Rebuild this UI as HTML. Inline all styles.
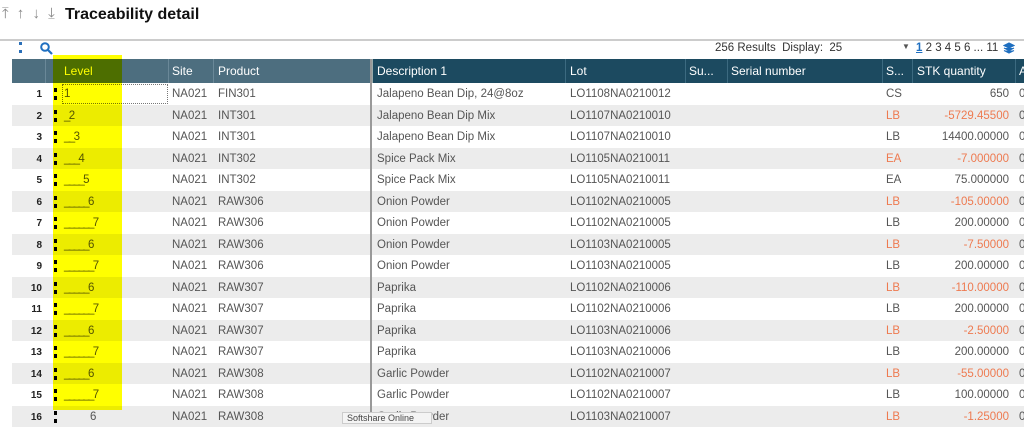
<!DOCTYPE html><html><head><style>
*{margin:0;padding:0;box-sizing:border-box}
body{width:1024px;height:422px;overflow:hidden;background:#fff;font-family:"Liberation Sans",sans-serif;font-size:11.5px;color:#555;position:relative}
.a{position:absolute;white-space:nowrap}
.hdr{position:absolute;top:59px;height:24px;color:#fff;font-size:12px;line-height:24px}
.row{position:absolute;left:12px;width:1012px;height:21.5px;line-height:23px}
.row.e{background:#ececec}
.c{position:absolute;top:0}
.o{color:#ee7a50}
.n{position:absolute;left:0;width:30px;text-align:right;font-weight:bold;font-size:10px;color:#222}
.dots{position:absolute;left:42px;top:5px;width:3px;height:12px;border-left:3px dotted #000}
.lv{letter-spacing:-1.6px}
</style></head><body>
<div class="a" style="left:2px;top:5px;font-size:15px;color:#888;letter-spacing:2px">⤒ ↑ ↓ ⤓</div>
<div class="a" style="left:65px;top:6px;font-size:16px;font-weight:bold;color:#111">Traceability detail</div>
<div class="a" style="left:0;top:39px;width:1024px;height:2px;background:#ccc"></div>
<div class="a" style="left:19px;top:42px;width:3px;height:11px;border-left:3px dotted #2a6fb8"></div>
<svg class="a" style="left:40px;top:42px" width="13" height="13"><circle cx="5" cy="5" r="3.8" fill="none" stroke="#1f6fc0" stroke-width="2"/><line x1="8" y1="8" x2="12" y2="12" stroke="#1f6fc0" stroke-width="2.2"/></svg>
<div class="a" style="left:715px;top:42px;font-size:11.5px;color:#333">256 Results &nbsp;Display: &nbsp;25</div>
<div class="a" style="left:902px;top:42px;font-size:8px;color:#555">▼</div>
<div class="a" style="left:916px;top:42px;font-size:11.5px;color:#333"><span style="color:#1f6fc0;text-decoration:underline;font-weight:bold">1</span> 2 3 4 5 6 ... 11</div>
<svg class="a" style="left:1003px;top:42px" width="12" height="12"><path d="M6 1L11 3.5 6 6 1 3.5Z M1 6L6 8.5 11 6 M1 8.5L6 11 11 8.5" fill="#1f6fc0" stroke="#1f6fc0" stroke-width="1.2"/></svg>
<div class="hdr" style="left:12px;width:358px;background:#4d6e7f"></div>
<div class="hdr" style="left:370px;width:3px;background:#9aa;"></div>
<div class="hdr" style="left:373px;width:651px;background:#1c4a60"></div>
<div class="hdr" style="left:45px;width:1px;background:#6a8898"></div>
<div class="hdr" style="left:168px;width:1px;background:#6a8898"></div>
<div class="hdr" style="left:213px;width:1px;background:#6a8898"></div>
<div class="hdr" style="left:565px;width:1px;background:#3c6a80"></div>
<div class="hdr" style="left:685px;width:1px;background:#3c6a80"></div>
<div class="hdr" style="left:727px;width:1px;background:#3c6a80"></div>
<div class="hdr" style="left:882px;width:1px;background:#3c6a80"></div>
<div class="hdr" style="left:912px;width:1px;background:#3c6a80"></div>
<div class="hdr" style="left:1015px;width:1px;background:#3c6a80"></div>
<div class="hdr" style="left:64px">Level</div>
<div class="hdr" style="left:172px">Site</div>
<div class="hdr" style="left:218px">Product</div>
<div class="hdr" style="left:377px">Description 1</div>
<div class="hdr" style="left:570px">Lot</div>
<div class="hdr" style="left:689px">Su...</div>
<div class="hdr" style="left:731px">Serial number</div>
<div class="hdr" style="left:886px">S...</div>
<div class="hdr" style="left:917px">STK quantity</div>
<div class="hdr" style="left:1019px">A</div>
<div id="rows"></div>
<script>
var d=[["1","FIN301","Jalapeno Bean Dip, 24@8oz","LO1108NA0210012","CS","650",0],
["_2","INT301","Jalapeno Bean Dip Mix","LO1107NA0210010","LB","-5729.45500",1],
["__3","INT301","Jalapeno Bean Dip Mix","LO1107NA0210010","LB","14400.00000",0],
["___4","INT302","Spice Pack Mix","LO1105NA0210011","EA","-7.000000",1],
["____5","INT302","Spice Pack Mix","LO1105NA0210011","EA","75.000000",0],
["_____6","RAW306","Onion Powder","LO1102NA0210005","LB","-105.00000",1],
["______7","RAW306","Onion Powder","LO1102NA0210005","LB","200.00000",0],
["_____6","RAW306","Onion Powder","LO1103NA0210005","LB","-7.50000",1],
["______7","RAW306","Onion Powder","LO1103NA0210005","LB","200.00000",0],
["_____6","RAW307","Paprika","LO1102NA0210006","LB","-110.00000",1],
["______7","RAW307","Paprika","LO1102NA0210006","LB","200.00000",0],
["_____6","RAW307","Paprika","LO1103NA0210006","LB","-2.50000",1],
["______7","RAW307","Paprika","LO1103NA0210006","LB","200.00000",0],
["_____6","RAW308","Garlic Powder","LO1102NA0210007","LB","-55.00000",1],
["______7","RAW308","Garlic Powder","LO1102NA0210007","LB","100.00000",0],
["6","RAW308","Garlic Powder","LO1103NA0210007","LB","-1.25000",1]];
var h="";
d.forEach(function(r,i){var t=83+i*21.5,o=r[6]?' o':'';
h+='<div class="row'+(i%2?' e':'')+'" style="top:'+t+'px"><span class="n">'+(i+1)+'</span><span class="dots"></span>'+
'<span class="c lv" style="left:'+(i==15?78:52)+'px">'+r[0]+'</span><span class="c" style="left:160px">NA021</span><span class="c" style="left:206px">'+r[1]+'</span>'+
'<span class="c" style="left:365px">'+r[2]+'</span><span class="c" style="left:558px">'+r[3]+'</span><span class="c'+o+'" style="left:874px">'+r[4]+'</span>'+
'<span class="c'+o+'" style="right:15px">'+r[5]+'</span><span class="c" style="left:1007px">0</span></div>';});
h+='<div class="a" style="left:370px;top:59px;width:2px;height:363px;background:#999"></div>';
h+='<div class="a" style="left:62px;top:84px;width:106px;height:20px;border:1px dotted #777"></div>';
h+='<div class="a" style="left:53px;top:55px;width:69px;height:355px;background:#ffff00;mix-blend-mode:multiply"></div>';
h+='<div class="a" style="left:342px;top:412px;width:90px;height:12px;border:1px solid #ccc;background:#f4f4f4;font-size:9px;color:#444;padding-left:4px">Softshare Online</div>';
document.getElementById("rows").innerHTML=h;
</script>
</body></html>
